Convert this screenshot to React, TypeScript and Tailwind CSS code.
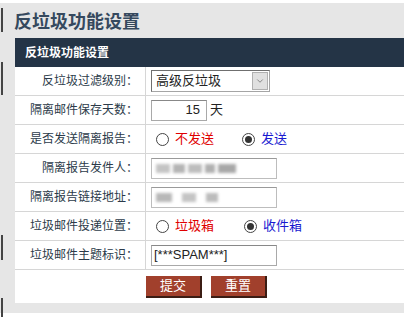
import { ChevronDown } from "lucide-react";

const font = "font-['Liberation_Sans','Noto_Sans_CJK_SC',sans-serif]";

const Radio = ({ checked }: { checked?: boolean }) => (
  <span className="w-[13px] h-[13px] rounded-full border border-[#444] bg-white flex items-center justify-center shrink-0">
    {checked && <span className="w-[7px] h-[7px] rounded-full bg-[#333]" />}
  </span>
);

const Row = ({ label, children }: { label: string; children: React.ReactNode }) => (
  <div className="flex h-[29px] border-b border-[#d6d6d6]">
    <div className="w-[131px] shrink-0 border-r border-[#d6d6d6] flex items-center justify-end pr-[7px] text-[12px] text-[#2c3b4a]">
      {label}
    </div>
    <div className="flex-1 flex items-center pl-[5px] text-[12px]">{children}</div>
  </div>
);

const Blurred = ({ blocks }: { blocks: { w: number; c: string }[] }) => (
  <div className="flex items-center gap-[3px] blur-[1.5px]">
    {blocks.map((b, i) => (
      <span key={i} className="h-[9px] inline-block" style={{ width: b.w, background: b.c }} />
    ))}
  </div>
);

export default function App() {
  return (
    <div className={`w-[412px] h-[321px] bg-white overflow-hidden ${font}`}>
      <div className="relative mt-[3px] w-[404px] bg-[#e6e6e6] pl-[15px] pb-[10px]">
        {/* side marks */}
        <span className="absolute left-[1px] top-[5px] w-[2px] h-[24px] bg-[#444]" />
        <span className="absolute left-[1px] top-[59px] w-[2px] h-[33px] bg-[#444]" />
        <span className="absolute left-[1px] top-[232px] w-[2px] h-[25px] bg-[#444]" />
        <span className="absolute left-[1px] top-[295px] w-[2px] h-[19px] bg-[#444]" />

        <h1 className="h-[35px] flex items-center pt-[2px] -ml-[1px] text-[18px] font-bold text-[#35495e] leading-none">
          反垃圾功能设置
        </h1>
        <div className="h-[29px] bg-[#243446] flex items-center pl-[10px] text-[12px] font-bold text-white">
          反垃圾功能设置
        </div>

        <div className="bg-white">
          <Row label="反垃圾过滤级别：">
            <div className="w-[119px] h-[22px] border border-[#a5a5a5] border-t-[#6f6f6f] border-l-[#6f6f6f] flex items-center justify-between pl-[4px] pr-[1px] text-[13px] text-[#222]">
              <span>高级反垃圾</span>
              <span className="w-[16px] h-[18px] bg-[#e0e0e0] border border-[#b0b0b0] flex items-center justify-center">
                <ChevronDown size={10} strokeWidth={1.5} className="text-[#555]" />
              </span>
            </div>
          </Row>
          <Row label="隔离邮件保存天数：">
            <div className="w-[56px] h-[21px] border border-[#a9a9a9] border-t-[#888] flex items-center justify-end pr-[6px] text-[13px] text-[#222]">
              15
            </div>
            <span className="ml-[3px] text-[13px] text-[#222]">天</span>
          </Row>
          <Row label="是否发送隔离报告：">
            <div className="flex items-center ml-[5px]">
              <Radio />
              <span className="ml-[6px] text-[13px] text-[#e00000]">不发送</span>
              <span className="ml-[28px]"><Radio checked /></span>
              <span className="ml-[6px] text-[13px] text-[#1a1ad0]">发送</span>
            </div>
          </Row>
          <Row label="隔离报告发件人：">
            <div className="w-[126px] h-[21px] border border-[#bdbdbd] border-t-[#9a9a9a] flex items-center pl-[4px]">
              <Blurred
                blocks={[
                  { w: 14, c: "#c4c4c4" },
                  { w: 12, c: "#b4b4b4" },
                  { w: 14, c: "#bdbdbd" },
                  { w: 10, c: "#b0b0b0" },
                  { w: 18, c: "#a8a8a8" },
                ]}
              />
            </div>
          </Row>
          <Row label="隔离报告链接地址：">
            <div className="w-[126px] h-[21px] border border-[#bdbdbd] border-t-[#9a9a9a] flex items-center pl-[4px]">
              <Blurred
                blocks={[
                  { w: 16, c: "#b8b8b8" },
                  { w: 4, c: "#ffffff" },
                  { w: 14, c: "#c4c4c4" },
                  { w: 4, c: "#ffffff" },
                  { w: 12, c: "#bcbcbc" },
                ]}
              />
            </div>
          </Row>
          <Row label="垃圾邮件投递位置：">
            <div className="flex items-center ml-[5px]">
              <Radio />
              <span className="ml-[6px] text-[13px] text-[#e00000]">垃圾箱</span>
              <span className="ml-[30px]"><Radio checked /></span>
              <span className="ml-[6px] text-[13px] text-[#1a1ad0]">收件箱</span>
            </div>
          </Row>
          <Row label="垃圾邮件主题标识：">
            <div className="w-[126px] h-[21px] border border-[#a9a9a9] border-t-[#888] flex items-center pl-[2px] text-[13px] text-[#222]">
              [***SPAM***]
            </div>
          </Row>
          <div className="h-[33px] flex items-start pt-[6px] pl-[131px] gap-[9px]">
            <button className="w-[56px] h-[22px] bg-[#a1402c] text-white text-[13px] border-r-2 border-b-2 border-[#3b1d14]">
              提交
            </button>
            <button className="w-[56px] h-[22px] bg-[#a1402c] text-white text-[13px] border-r-2 border-b-2 border-[#3b1d14]">
              重置
            </button>
          </div>
        </div>
      </div>
    </div>
  );
}
